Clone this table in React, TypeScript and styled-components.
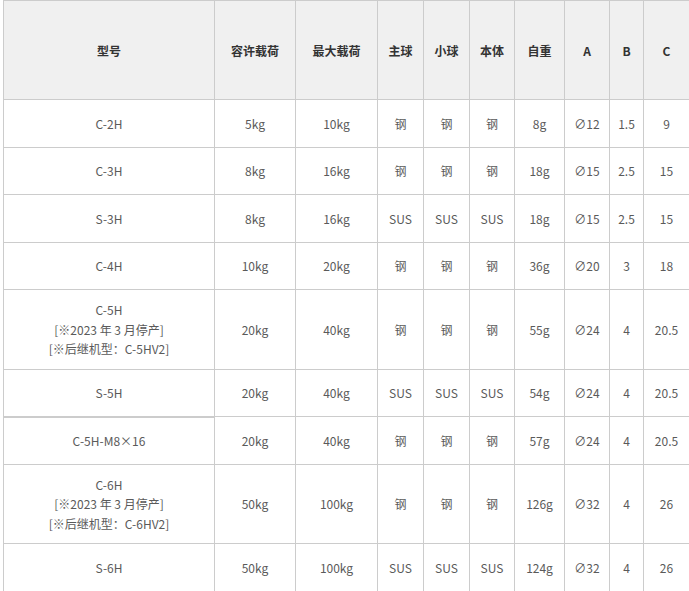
import styled, { createGlobalStyle } from "styled-components";

type RowType = {
  model: string[];
  rated: string;
  max: string;
  mainBall: string;
  smallBall: string;
  body: string;
  weight: string;
  a: string;
  b: string;
  c: string;
  thick?: boolean;
};

const headers = ["型号", "容许载荷", "最大载荷", "主球", "小球", "本体", "自重", "A", "B", "C"];
const colWidths = [211, 81, 82, 46, 46, 45, 50, 45, 34, 46];

const steel = "钢";
const sus = "SUS";

const rows: RowType[] = [
  { model: ["C-2H"], rated: "5kg", max: "10kg", mainBall: steel, smallBall: steel, body: steel, weight: "8g", a: "∅12", b: "1.5", c: "9" },
  { model: ["C-3H"], rated: "8kg", max: "16kg", mainBall: steel, smallBall: steel, body: steel, weight: "18g", a: "∅15", b: "2.5", c: "15" },
  { model: ["S-3H"], rated: "8kg", max: "16kg", mainBall: sus, smallBall: sus, body: sus, weight: "18g", a: "∅15", b: "2.5", c: "15" },
  { model: ["C-4H"], rated: "10kg", max: "20kg", mainBall: steel, smallBall: steel, body: steel, weight: "36g", a: "∅20", b: "3", c: "18" },
  {
    model: ["C-5H", "[※2023 年 3 月停产]", "[※后继机型：C-5HV2]"],
    rated: "20kg", max: "40kg", mainBall: steel, smallBall: steel, body: steel, weight: "55g", a: "∅24", b: "4", c: "20.5",
  },
  { model: ["S-5H"], rated: "20kg", max: "40kg", mainBall: sus, smallBall: sus, body: sus, weight: "54g", a: "∅24", b: "4", c: "20.5", thick: true },
  { model: ["C-5H-M8×16"], rated: "20kg", max: "40kg", mainBall: steel, smallBall: steel, body: steel, weight: "57g", a: "∅24", b: "4", c: "20.5" },
  {
    model: ["C-6H", "[※2023 年 3 月停产]", "[※后继机型：C-6HV2]"],
    rated: "50kg", max: "100kg", mainBall: steel, smallBall: steel, body: steel, weight: "126g", a: "∅32", b: "4", c: "26",
  },
  { model: ["S-6H"], rated: "50kg", max: "100kg", mainBall: sus, smallBall: sus, body: sus, weight: "124g", a: "∅32", b: "4", c: "26" },
];

const GlobalStyle = createGlobalStyle`
  html, body {
    margin: 0;
    padding: 0;
    background: #fff;
    overflow: hidden;
  }
`;

const App = () => {
  return (
    <>
      <GlobalStyle />
      <PageWrapper>
        <SpecTable>
          <colgroup>
            {colWidths.map((w, i) => (
              <col key={`col-${i}`} style={{ width: w }} />
            ))}
          </colgroup>
          <thead>
            <HeadRow>
              {headers.map((h) => (
                <HeadCell key={h}>{h}</HeadCell>
              ))}
            </HeadRow>
          </thead>
          <tbody>
            {rows.map((row, index) => (
              <BodyRow key={`${row.model[0]}-${index}`}>
                <Cell $thick={row.thick}>
                  {row.model.map((line) => (
                    <ModelLine key={line}>{line}</ModelLine>
                  ))}
                </Cell>
                <Cell>{row.rated}</Cell>
                <Cell>{row.max}</Cell>
                <Cell>{row.mainBall}</Cell>
                <Cell>{row.smallBall}</Cell>
                <Cell>{row.body}</Cell>
                <Cell>{row.weight}</Cell>
                <Cell>{row.a}</Cell>
                <Cell>{row.b}</Cell>
                <Cell>{row.c}</Cell>
              </BodyRow>
            ))}
          </tbody>
        </SpecTable>
      </PageWrapper>
    </>
  );
};

const PageWrapper = styled.div`
  padding-left: 3px;
  width: 689px;
  height: 591px;
  overflow: hidden;
  box-sizing: border-box;
`;

const SpecTable = styled.table`
  width: 686px;
  table-layout: fixed;
  border-collapse: collapse;
  font-family: "Noto Sans CJK SC", "Noto Sans", sans-serif;
  font-size: 12px;
  color: #5a5a5a;
  text-align: center;
`;

const HeadRow = styled.tr`
  height: 99px;
`;

const HeadCell = styled.th`
  background-color: #f0f0f0;
  border: 1px solid #cccccc;
  color: #333333;
  font-weight: bold;
  padding: 0 4px;
`;

const BodyRow = styled.tr`
  height: 47.5px;
`;

const Cell = styled.td<{ $thick?: boolean }>`
  border: 1px solid #cccccc;
  ${({ $thick }) => ($thick ? "border-bottom: 2px solid #cccccc;" : "")}
  padding: 10px 4px;
  line-height: 19.5px;
  vertical-align: middle;
`;

const ModelLine = styled.div`
  white-space: nowrap;
`;

export default App;
